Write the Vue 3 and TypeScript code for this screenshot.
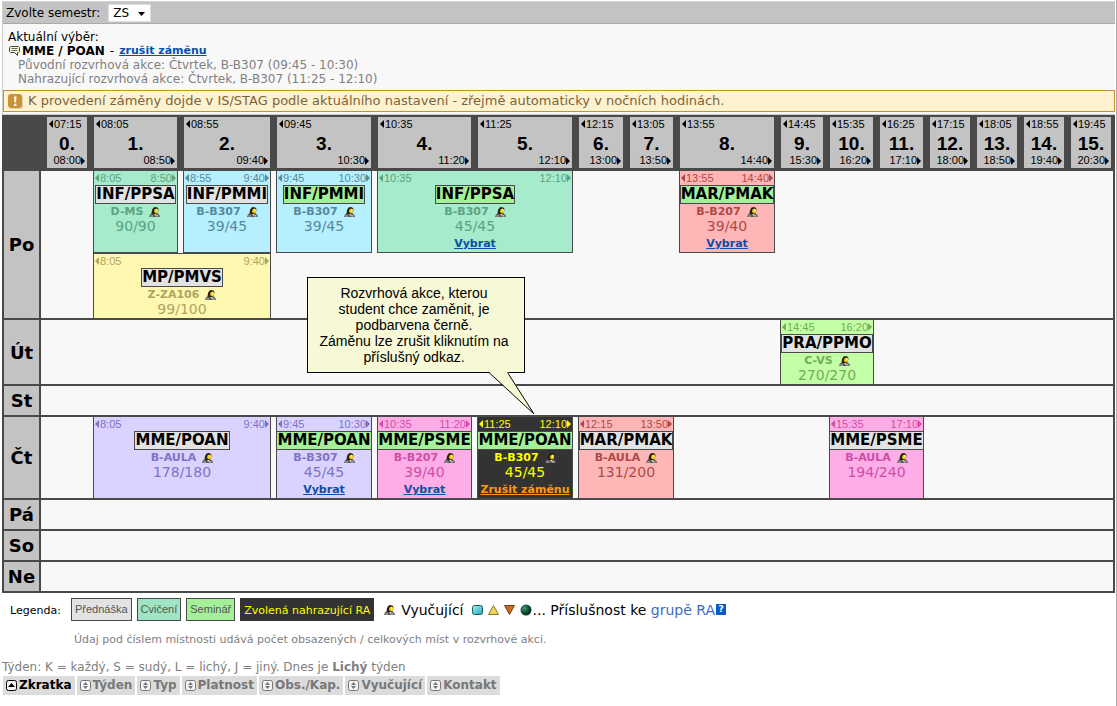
<script setup lang="ts">
import { ref } from 'vue'

type Kind = 'lecture' | 'seminar'
type Tone = 'teal' | 'sky' | 'red' | 'yellow' | 'green' | 'violet' | 'pink' | 'chosen'

interface Period { no: number; from: string; to: string; width: number }
interface Lesson {
  col: number; span: number; from: string; to: string; name: string; kind: Kind
  room: string; count: string; tone: Tone; action?: string
}
interface Cell { key: string; span: number; lesson?: Lesson }
interface Day { label: string; lanes: Lesson[][] }

const semester = ref('ZS')

const periods: Period[] = [
  { no: 0, from: '07:15', to: '08:00', width: 52 },
  { no: 1, from: '08:05', to: '08:50', width: 90 },
  { no: 2, from: '08:55', to: '09:40', width: 93 },
  { no: 3, from: '09:45', to: '10:30', width: 101 },
  { no: 4, from: '10:35', to: '11:20', width: 100 },
  { no: 5, from: '11:25', to: '12:10', width: 101 },
  { no: 6, from: '12:15', to: '13:00', width: 51 },
  { no: 7, from: '13:05', to: '13:50', width: 50 },
  { no: 8, from: '13:55', to: '14:40', width: 101 },
  { no: 9, from: '14:45', to: '15:30', width: 49 },
  { no: 10, from: '15:35', to: '16:20', width: 50 },
  { no: 11, from: '16:25', to: '17:10', width: 50 },
  { no: 12, from: '17:15', to: '18:00', width: 47 },
  { no: 13, from: '18:05', to: '18:50', width: 47 },
  { no: 14, from: '18:55', to: '19:40', width: 47 },
  { no: 15, from: '19:45', to: '20:30', width: 43 }
]

const days: Day[] = [
  {
    label: 'Po',
    lanes: [
      [
        { col: 1, span: 1, from: '8:05', to: '8:50', name: 'INF/PPSA', kind: 'lecture', room: 'D-MS', count: '90/90', tone: 'teal' },
        { col: 2, span: 1, from: '8:55', to: '9:40', name: 'INF/PMMI', kind: 'lecture', room: 'B-B307', count: '39/45', tone: 'sky' },
        { col: 3, span: 1, from: '9:45', to: '10:30', name: 'INF/PMMI', kind: 'seminar', room: 'B-B307', count: '39/45', tone: 'sky' },
        { col: 4, span: 2, from: '10:35', to: '12:10', name: 'INF/PPSA', kind: 'seminar', room: 'B-B307', count: '45/45', tone: 'teal', action: 'Vybrat' },
        { col: 8, span: 1, from: '13:55', to: '14:40', name: 'MAR/PMAK', kind: 'seminar', room: 'B-B207', count: '39/40', tone: 'red', action: 'Vybrat' }
      ],
      [
        { col: 1, span: 2, from: '8:05', to: '9:40', name: 'MP/PMVS', kind: 'lecture', room: 'Z-ZA106', count: '99/100', tone: 'yellow' }
      ]
    ]
  },
  {
    label: 'Út',
    lanes: [[
      { col: 9, span: 2, from: '14:45', to: '16:20', name: 'PRA/PPMO', kind: 'lecture', room: 'C-VS', count: '270/270', tone: 'green' }
    ]]
  },
  { label: 'St', lanes: [[]] },
  {
    label: 'Čt',
    lanes: [[
      { col: 1, span: 2, from: '8:05', to: '9:40', name: 'MME/POAN', kind: 'lecture', room: 'B-AULA', count: '178/180', tone: 'violet' },
      { col: 3, span: 1, from: '9:45', to: '10:30', name: 'MME/POAN', kind: 'seminar', room: 'B-B307', count: '45/45', tone: 'violet', action: 'Vybrat' },
      { col: 4, span: 1, from: '10:35', to: '11:20', name: 'MME/PSME', kind: 'seminar', room: 'B-B207', count: '39/40', tone: 'pink', action: 'Vybrat' },
      { col: 5, span: 1, from: '11:25', to: '12:10', name: 'MME/POAN', kind: 'seminar', room: 'B-B307', count: '45/45', tone: 'chosen', action: 'Zrušit záměnu' },
      { col: 6, span: 2, from: '12:15', to: '13:50', name: 'MAR/PMAK', kind: 'lecture', room: 'B-AULA', count: '131/200', tone: 'red' },
      { col: 10, span: 2, from: '15:35', to: '17:10', name: 'MME/PSME', kind: 'lecture', room: 'B-AULA', count: '194/240', tone: 'pink' }
    ]]
  },
  { label: 'Pá', lanes: [[]] },
  { label: 'So', lanes: [[]] },
  { label: 'Ne', lanes: [[]] }
]

/* Fills the space between lessons with empty cells. */
function cellsOf(lane: Lesson[]): Cell[] {
  const cells: Cell[] = []
  let at = 0
  for (const lesson of lane) {
    if (lesson.col > at) cells.push({ key: 'e' + at, span: lesson.col - at })
    cells.push({ key: 'l' + lesson.col, span: lesson.span, lesson })
    at = lesson.col + lesson.span
  }
  if (at < periods.length) cells.push({ key: 'e' + at, span: periods.length - at })
  return cells
}

const sortColumns = ['Zkratka', 'Týden', 'Typ', 'Platnost', 'Obs./Kap.', 'Vyučující', 'Kontakt']
const sortedBy = ref('Zkratka')
</script>

<template>
  <svg class="defs" width="0" height="0" aria-hidden="true">
    <symbol id="person" viewBox="0 0 11 10">
      <path d="M0 10L1 7.500L3 6H8L10.500 8L11 10Z" fill="#5c5c5c" />
      <path d="M1.500 8.500H4V9.500H1ZM7 8H9L10 9.500H7Z" fill="#b4b4b4" />
      <path d="M2.500 6.500L3 3L4.500 .500L7 0L9 1L9.500 3L8 6.500L6 8L4 7Z" fill="#2a2108" />
      <path d="M5.500 2.500L7.500 1.500L9 2.500V5L7.500 6.500L6 6L5 4.500Z" fill="#f0cc1c" />
      <path d="M7 2H8.500V4H7Z" fill="#fff27a" />
      <path d="M5 7L6.500 9L7.500 7Z" fill="#d8d8d8" />
    </symbol>
  </svg>

  <main class="page">
    <section class="panel">
      <form class="semester" @submit.prevent>
        <label for="semester">Zvolte semestr:</label>
        <span class="pick">
          <select id="semester" v-model="semester">
            <option>ZS</option>
            <option>LS</option>
          </select>
          <svg width="7" height="4" viewBox="0 0 7 4"><path d="M0 0H7L3.500 4Z" fill="#000" /></svg>
        </span>
      </form>

      <div class="choice">
        <p class="title">Aktuální výběr:</p>
        <p class="subject">
          <svg width="11" height="10" viewBox="0 0 11 10">
            <path d="M1.500.500H9.500L10.500 1.500V5.500L9.500 6.500H8.500V9.500L5.500 6.500H1.500L.500 5.500V1.500Z" fill="#f7f7d0" stroke="#444" />
            <path d="M2.500 2.500H8.500M2.500 4.500H8.500" stroke="#666" />
          </svg>
          <strong>MME / POAN</strong><span class="dash">-</span><a href="#">zrušit záměnu</a>
        </p>
        <p class="detail">Původní rozvrhová akce: Čtvrtek, B-B307 (09:45 - 10:30)</p>
        <p class="detail">Nahrazující rozvrhová akce: Čtvrtek, B-B307 (11:25 - 12:10)</p>
      </div>

      <p class="notice">
        <svg width="15" height="15" viewBox="0 0 15 15">
          <rect x="1" y="1" width="14" height="14" rx="3" fill="#e3d4b0" />
          <rect width="14" height="14" rx="3" fill="#cc9236" />
          <path d="M6 2.500H8.500L8 8.500H6.500ZM6 9.800H8.400V12H6Z" fill="#fff" />
        </svg>
        K provedení záměny dojde v IS/STAG podle aktuálního nastavení - zřejmě automaticky v nočních hodinách.
      </p>
    </section>

    <div class="board">
      <table class="timetable">
        <colgroup>
          <col class="day-col">
          <col v-for="p in periods" :key="p.no" :style="{ width: p.width + 'px' }">
        </colgroup>
        <thead>
          <tr>
            <td class="corner"></td>
            <th v-for="p in periods" :key="p.no" scope="col">
              <div class="period">
                <span class="time"><i class="arrow left"></i>{{ p.from }}</span>
                <span class="number">{{ p.no }}.</span>
                <span class="time end">{{ p.to }}<i class="arrow right"></i></span>
              </div>
            </th>
          </tr>
        </thead>
        <tbody v-for="d in days" :key="d.label">
          <tr v-for="(lane, i) in d.lanes" :key="i">
            <th v-if="i === 0" class="day" scope="row" :rowspan="d.lanes.length">{{ d.label }}</th>
            <td v-for="c in cellsOf(lane)" :key="c.key" :colspan="c.span">
              <div v-if="c.lesson" class="lesson" :class="c.lesson.tone">
                <div class="times">
                  <span class="time"><i class="arrow left"></i>{{ c.lesson.from }}</span>
                  <span class="time">{{ c.lesson.to }}<i class="arrow right"></i></span>
                </div>
                <span class="name" :class="c.lesson.kind">{{ c.lesson.name }}</span>
                <div class="room">{{ c.lesson.room }}<svg width="11" height="10"><use href="#person" /></svg></div>
                <div class="count">{{ c.lesson.count }}</div>
                <a v-if="c.lesson.action" class="action" href="#">{{ c.lesson.action }}</a>
              </div>
            </td>
          </tr>
        </tbody>
      </table>

      <aside class="balloon">
        Rozvrhová akce, kterou student chce zaměnit, je podbarvena černě.<br>Záměnu lze zrušit kliknutím na příslušný odkaz.
        <svg class="tail" width="47" height="43" viewBox="0 0 47 43">
          <path d="M1 0H20L46 42Z" fill="#f7f8d6" />
          <path d="M1 .500L46 42L19.500 .500" fill="none" stroke="#000" />
        </svg>
      </aside>
    </div>

    <section class="legend">
      <span class="caption">Legenda:</span>
      <span class="tag lecture">Přednáška</span>
      <span class="tag exercise">Cvičení</span>
      <span class="tag seminar">Seminář</span>
      <span class="tag picked">Zvolená nahrazující RA</span>
      <span class="teacher"><svg width="11" height="10"><use href="#person" /></svg>Vyučující</span>
      <span class="groups">
        <svg width="60" height="12" viewBox="0 0 60 12">
          <defs>
            <linearGradient id="aqua" x2="1" y2="1"><stop stop-color="#9ff4f6" /><stop offset="1" stop-color="#20a8b8" /></linearGradient>
            <radialGradient id="pine" cx=".35" cy=".35"><stop stop-color="#3f9a78" /><stop offset="1" stop-color="#0c3a28" /></radialGradient>
          </defs>
          <rect x=".5" y="1.500" width="10" height="9" rx="2" fill="url(#aqua)" stroke="#1d5961" />
          <path d="M21.500 1.500L26.500 10.500H16.500Z" fill="#ecd75c" stroke="#8d7a2c" />
          <path d="M32.500 1.500H42.500L37.500 10.500Z" fill="#cc6a1e" stroke="#7c3d10" />
          <circle cx="54" cy="6" r="5.500" fill="url(#pine)" />
        </svg>... Příslušnost ke <a href="#">grupě RA</a>
        <button class="help" type="button" aria-label="Nápověda">?</button>
      </span>
    </section>
    <p class="hint">Údaj pod číslem místnosti udává počet obsazených / celkových míst v rozvrhové akci.</p>

    <p class="week">Týden: K = každý, S = sudý, L = lichý, J = jiný. Dnes je <strong>Lichý</strong> týden</p>
    <table class="sorting">
      <thead>
        <tr>
          <th v-for="s in sortColumns" :key="s" scope="col">
            <button type="button" :class="{ active: s === sortedBy }" @click="sortedBy = s">
              <svg width="11" height="11" viewBox="0 0 11 11">
                <rect x=".5" y=".5" width="10" height="10" rx="2" fill="#f4f4f4" stroke="currentColor" />
                <path v-if="s === sortedBy" d="M2 7H9L5.500 3Z" fill="currentColor" />
                <path v-else d="M3 5H8L5.500 2ZM3 6H8L5.500 9Z" fill="currentColor" />
              </svg>{{ s }}
            </button>
          </th>
        </tr>
      </thead>
    </table>
  </main>
</template>

<style>
body { background: #fff; }
</style>

<style scoped>
.defs { position: absolute; }
.page {
  box-sizing: border-box;
  min-height: 100vh;
  padding: 1px 0 0 2px;
  border-right: 1px solid #aaa;
  font: 12px/14px "DejaVu Sans", Verdana, sans-serif;
  color: #000;
}
p { margin: 0; }
a { color: #0a4fa8; }

.panel {
  margin-right: 1px;
  padding-bottom: 2px;
  border-left: 1px solid #ccc;
  border-bottom: 1px solid #ccc;
  background: #f8f8f8;
}
.semester {
  display: flex;
  align-items: center;
  gap: 8px;
  height: 21px;
  padding-left: 3px;
  background: #c3c3c3;
  border-top: 1px solid #d4d4d4;
  border-bottom: 1px solid #aaa;
}
.semester label { line-height: 18px; padding-top: 1px; }
.pick { position: relative; display: flex; }
.pick select {
  appearance: none;
  width: 43px;
  height: 18px;
  padding: 0 4px;
  border: 1px solid #ddd;
  background: #fff;
  font: 12px/16px "DejaVu Sans", Verdana, sans-serif;
  color: #000;
}
.pick svg { position: absolute; right: 6px; top: 8px; pointer-events: none; }

.choice { padding: 6px 5px 4px; }
.subject { display: flex; align-items: center; font-size: 12px; }
.subject svg { margin: 0 2px 0 1px; }
.subject a { font-size: 11px; font-weight: bold; }
.dash { margin: 0 5px; }
.detail { padding-left: 10px; color: #808080; }

.notice {
  display: flex;
  align-items: center;
  gap: 5px;
  height: 20px;
  padding: 0 4px;
  border: 1px solid #c8912e;
  background: #fff2cf;
  font-size: 13px;
  color: #7d6339;
}

.board { position: relative; margin-right: 1px; }
.timetable {
  width: 100%;
  table-layout: fixed;
  border-collapse: separate;
  border-spacing: 0;
  border: 2px solid #494949;
  border-bottom: 0;
  background: #f8f8f8;
}
.day-col { width: 37px; }
.timetable th, .timetable td { padding: 0; }
.timetable thead th, .corner { background: #494949; }
.timetable thead th { padding: 0 6px 3px 1px; }
.timetable thead th:nth-child(2) { padding-left: 6px; }
.timetable thead th:last-child { padding-right: 2px; }
.period {
  display: flex;
  flex-direction: column;
  padding: 0 2px 1px;
  background: #c3c3c3;
}
.number { padding: 5px 0 2px; font: bold 19px/16px "Liberation Sans", Arial, sans-serif; }
.time {
  display: flex;
  align-items: center;
  font: 11px/14px "Liberation Sans", Arial, sans-serif;
}
.time.end { justify-content: flex-end; line-height: 13px; }
.arrow { border: solid transparent; border-width: 4px 0; }
.arrow.left { border-right: 4px solid currentColor; margin-right: 1px; }
.arrow.right { border-left: 4px solid currentColor; }

.timetable .day {
  border-right: 2px solid #494949;
  border-bottom: 2px solid #494949;
  background: #c3c3c3;
  font-size: 18px;
  line-height: 29px;
}
.timetable tbody td { height: 1px; padding-right: 5px; vertical-align: top; }
.timetable tbody tr:last-child td { border-bottom: 2px solid #494949; }

.lesson {
  box-sizing: border-box;
  display: flex;
  flex-direction: column;
  align-items: center;
  height: 100%;
  border: solid #494949;
  border-width: 0 1px;
}
tr:not(:last-child) .lesson { border-bottom-width: 1px; }
tr + tr .lesson { border-top-width: 1px; }
.times { align-self: stretch; display: flex; justify-content: space-between; padding: 0 1px; }
.name {
  border: 1px solid #494949;
  font-size: 15px;
  font-weight: bold;
  line-height: 17px;
  color: #000;
  white-space: nowrap;
}
.room { display: flex; align-items: center; gap: 6px; padding-top: 1px; font-size: 11px; font-weight: bold; }
.count { padding-bottom: 1px; font-size: 14px; line-height: 15px; }
.action { font-size: 11px; font-weight: bold; line-height: 17px; white-space: nowrap; }

.lecture { background: #e3e3e3; }
.seminar { background: #a4f098; }
.exercise { background: #9fe5c4; }

.teal { background: #a6ebcb; color: #5da283; }
.sky { background: #b6efff; color: #568a9b; }
.red { background: #ffb6b6; color: #ad4848; }
.yellow { background: #fff8b0; color: #ada564; }
.green { background: #c3ffa6; color: #72ab58; }
.violet { background: #dad3ff; color: #8271c7; }
.pink { background: #ffade7; color: #cb4fa8; }
.chosen { background: #333; color: #ff0; }
.chosen .action { color: #ff9912; }

.balloon {
  position: absolute;
  left: 305px;
  top: 162px;
  box-sizing: border-box;
  width: 218px;
  padding: 7px 14px 7px 10px;
  border: 1px solid #000;
  background: #f7f8d6;
  font: 14px/16px "Liberation Sans", Arial, sans-serif;
  text-align: center;
}
.tail { position: absolute; left: 180px; top: 94px; }

.legend { display: flex; align-items: center; gap: 5px; height: 23px; padding: 5px 0 0 8px; }
.caption { width: 56px; padding-top: 2px; font-size: 11px; }
.tag {
  box-sizing: border-box;
  height: 23px;
  padding: 0 3px;
  border: 1px solid #494949;
  font: 11px/20px "Liberation Sans", Arial, sans-serif;
  color: #555;
}
.picked { border: 0; padding: 0 4px; background: #333; font: 11px/25px "DejaVu Sans", Verdana, sans-serif; color: #ff0; }
.teacher, .groups { display: flex; align-items: center; font-size: 14px; white-space: pre; }
.teacher { gap: 6px; margin-left: 5px; }
.groups { margin-left: 4px; }
.groups a { color: #3c6cc0; text-decoration: none; }
.help {
  width: 10px;
  height: 11px;
  margin-left: 1px;
  padding: 0;
  border: 0;
  background: #0a5cc4;
  font: bold 9px/11px "DejaVu Sans", Verdana, sans-serif;
  color: #fff;
}
.hint { padding: 12px 0 0 72px; font-size: 11px; color: #808080; }
.week { padding-top: 13px; color: #808080; }

.sorting { margin-top: 2px; border-collapse: separate; border-spacing: 1px 0; }
.sorting th { padding: 0 1px 0 0; }
.sorting button {
  display: flex;
  align-items: center;
  gap: 2px;
  height: 19px;
  padding: 0 3px;
  border: 0;
  background: #dcdcdc;
  font: bold 12px/19px "DejaVu Sans", Verdana, sans-serif;
  color: #777;
}
.sorting button.active { color: #000; }
</style>
